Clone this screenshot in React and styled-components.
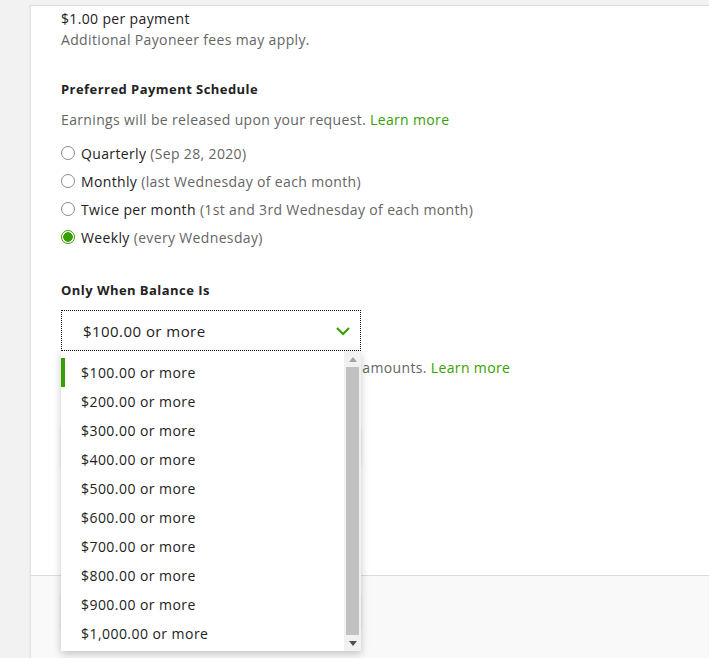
import React from 'react'
import styled, { createGlobalStyle } from 'styled-components';

const GlobalStyle = createGlobalStyle`
  html, body {
    margin: 0;
    background: #f2f2f2;
    font-family: "Open Sans", "Liberation Sans", sans-serif;
    color: #222;
  }
`;

const schedules = [
  { label: 'Quarterly', note: '(Sep 28, 2020)' },
  { label: 'Monthly', note: '(last Wednesday of each month)' },
  { label: 'Twice per month', note: '(1st and 3rd Wednesday of each month)' },
  { label: 'Weekly', note: '(every Wednesday)', checked: true },
];

const amounts = ['$100.00', '$200.00', '$300.00', '$400.00', '$500.00', '$600.00', '$700.00', '$800.00', '$900.00', '$1,000.00'];

export default function App() {
  return (
    <Page>
      <GlobalStyle />
      <Card>
        <Body>
          <Line>$1.00 per payment</Line>
          <Line muted>Additional Payoneer fees may apply.</Line>

          <Heading>Preferred Payment Schedule</Heading>
          <Line muted>Earnings will be released upon your request. <Link>Learn more</Link></Line>

          <Radios>
            {schedules.map(s => (
              <RadioRow key={s.label}>
                <Radio checked={s.checked} />
                <span>{s.label} <Note>{s.note}</Note></span>
              </RadioRow>
            ))}
          </Radios>

          <Heading>Only When Balance Is</Heading>
          <SelectWrap>
            <Select>
              <span>$100.00 or more</span>
              <svg width="16" height="12" viewBox="0 0 16 12">
                <path d="M2 3 L8 9 L14 3" fill="none" stroke="#37a000" strokeWidth="2.2" />
              </svg>
            </Select>
            <Menu>
              <Options>
                {amounts.map((a, i) => (
                  <Option key={a} active={i === 0}>{a} or more</Option>
                ))}
              </Options>
              <Scrollbar>
                <Arrow>
                  <svg width="8" height="5" viewBox="0 0 8 5"><path d="M0 5 L4 0 L8 5 Z" fill="#a3a3a3" /></svg>
                </Arrow>
                <Thumb />
                <Arrow>
                  <svg width="8" height="5" viewBox="0 0 8 5"><path d="M0 0 L4 5 L8 0 Z" fill="#505050" /></svg>
                </Arrow>
              </Scrollbar>
            </Menu>
          </SelectWrap>
          <Help>Hold payments to cut down fees on smaller amounts. <Link>Learn more</Link></Help>
          <Button>Save</Button>
        </Body>
        <Footer>
          <Button>Cancel</Button>
        </Footer>
      </Card>
    </Page>
  )
}

const Page = styled.div`
  padding: 5px 0 0 30px;
  min-height: 653px;
`;

const Card = styled.div`
  background: #fff;
  border-top: 1px solid #dedede;
  border-left: 1px solid #e2e2e2;
  box-shadow: -1px 0 2px rgba(0,0,0,0.04);
`;

const Body = styled.div`
  padding: 2px 0 0 30px;
  height: 569px;
  box-sizing: border-box;
  letter-spacing: 0.35px;
`;

const Line = styled.div`
  font-size: 14px;
  line-height: 21px;
  color: ${p => p.muted ? '#656565' : '#222'};
`;

const Link = styled.span`
  color: #37a000;
`;

const Heading = styled.div`
  font-size: 13px;
  font-weight: 700;
  line-height: 20px;
  letter-spacing: 0.45px;
  margin: 29px 0 10px;
`;

const Radios = styled.div`
  display: flex;
  flex-direction: column;
  margin-top: 9px;
`;

const RadioRow = styled.div`
  display: flex;
  align-items: center;
  gap: 6px;
  height: 28px;
  font-size: 14px;
  color: #222;
`;

const Radio = styled.span`
  width: 12px;
  height: 12px;
  border-radius: 50%;
  border: 1px solid ${p => p.checked ? '#37a000' : '#8a8a8a'};
  box-sizing: content-box;
  background: ${p => p.checked ? 'radial-gradient(circle, #37a000 0 4.5px, #fff 5px)' : '#fff'};
`;

const Note = styled.span`
  color: #656565;
`;

const SelectWrap = styled.div`
  position: relative;
  width: 300px;
`;

const Select = styled.div`
  height: 41px;
  box-sizing: border-box;
  border: 1px dotted #111;
  display: flex;
  align-items: center;
  justify-content: space-between;
  padding: 0 9px 0 21px;
  font-size: 15px;
  letter-spacing: 0.45px;
  color: #222;
`;

const Menu = styled.div`
  position: absolute;
  top: 41px;
  left: 0;
  width: 300px;
  height: 300px;
  background: #fff;
  display: flex;
  box-shadow: 0 3px 8px rgba(0,0,0,0.22);
  z-index: 2;
`;

const Options = styled.div`
  flex: 1;
  padding-top: 7px;
`;

const Option = styled.div`
  height: 29px;
  display: flex;
  align-items: center;
  padding-left: ${p => p.active ? '16px' : '20px'};
  border-left: ${p => p.active ? '4px solid #37a000' : 'none'};
  font-size: 14px;
  letter-spacing: 0.45px;
  color: #222;
`;

const Scrollbar = styled.div`
  width: 17px;
  background: #f1f1f1;
  display: flex;
  flex-direction: column;
  align-items: center;
`;

const Arrow = styled.div`
  height: 16px;
  display: flex;
  align-items: center;
  justify-content: center;
`;

const Thumb = styled.div`
  flex: 1;
  width: 13px;
  background: #c1c1c1;
`;

const Help = styled.div`
  margin-top: 7px;
  font-size: 14px;
  line-height: 20px;
  color: #656565;
`;

const Button = styled.button`
  margin-top: 48px;
  width: 300px;
  height: 40px;
  border: 1px solid #e0e0e0;
  background: #fff;
  border-radius: 3px;
  box-shadow: 0 1px 3px rgba(0,0,0,0.1);
  font-family: inherit;
  font-size: 14px;
  color: #222;
`;

const Footer = styled.div`
  border-top: 1px solid #dcdcdc;
  background: #f9f9f9;
  padding: 15px 0 0 30px;
  height: 88px;
  box-sizing: border-box;
  button { margin-top: 0; }
`;
